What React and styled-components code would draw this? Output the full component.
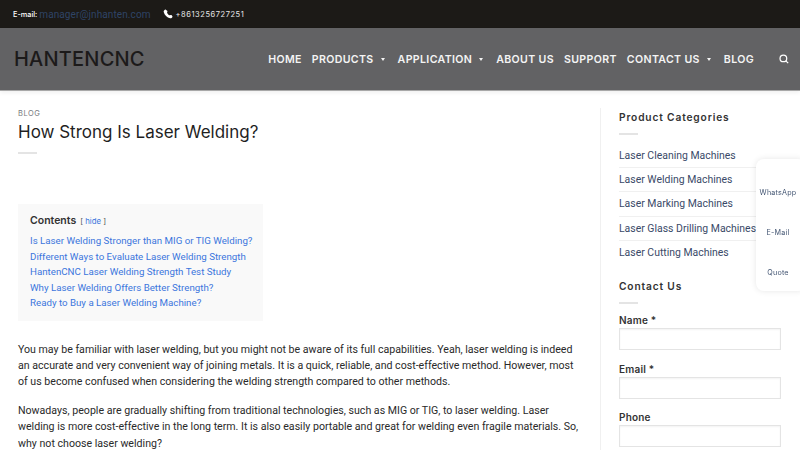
import styled, { createGlobalStyle } from "styled-components"

const GlobalStyle = createGlobalStyle`
html, body {
    margin: 0;
    padding: 0;
    height: 450px;
    overflow: hidden;
    background: #ffffff;
    font-family: Inter, "Liberation Sans", sans-serif;
}
* {
    box-sizing: border-box;
}
`

const menu = [
    { name: "HOME" },
    { name: "PRODUCTS", arrow: true },
    { name: "APPLICATION", arrow: true },
    { name: "ABOUT US" },
    { name: "SUPPORT" },
    { name: "CONTACT US", arrow: true },
    { name: "BLOG" },
]

const contents = [
    "Is Laser Welding Stronger than MIG or TIG Welding?",
    "Different Ways to Evaluate Laser Welding Strength",
    "HantenCNC Laser Welding Strength Test Study",
    "Why Laser Welding Offers Better Strength?",
    "Ready to Buy a Laser Welding Machine?",
]

const categories = [
    "Laser Cleaning Machines",
    "Laser Welding Machines",
    "Laser Marking Machines",
    "Laser Glass Drilling Machines",
    "Laser Cutting Machines",
]

export default function App() {
    return (
        <>
            <GlobalStyle />
            <TopBar>
                <MailLabel>E-mail:</MailLabel>
                <MailLink>manager@jnhanten.com</MailLink>
                <Phone>
                    <svg width="10" height="10" viewBox="0 0 24 24" fill="#ffffff">
                        <path d="M6.6 1.5c-.7-.4-1.500-.3-2.100.2L2.600 3.400C1.600 4.300 1.300 5.700 1.700 7c1 3.600 2.900 6.900 5.600 9.700 2.800 2.700 6.100 4.600 9.700 5.600 1.300.4 2.700.1 3.600-.9l1.700-1.900c.5-.6.6-1.400.2-2.100l-1.700-2.500c-.4-.6-1.200-.9-1.900-.7l-3 .9c-2.800-1.200-5-3.400-6.200-6.200l.9-3c.2-.7-.1-1.500-.7-1.900z" />
                    </svg>
                    <PhoneNumber>+8613256727251</PhoneNumber>
                </Phone>
            </TopBar>
            <Header>
                <Logo>HANTENCNC</Logo>
                <Nav>
                    {menu.map((item) => (
                        <NavItem key={item.name}>
                            {item.name}
                            {item.arrow && <Caret />}
                        </NavItem>
                    ))}
                    <SearchIcon width="10" height="10" viewBox="0 0 24 24" fill="none" stroke="#ffffff" strokeWidth="3">
                        <circle cx="10.500" cy="10.500" r="8" />
                        <path d="M16.500 16.500 L22 22" />
                    </SearchIcon>
                </Nav>
            </Header>
            <Page>
                <Main>
                    <Crumb>BLOG</Crumb>
                    <Title>How Strong Is Laser Welding?</Title>
                    <Divider />
                    <Toc>
                        <TocHead>
                            <TocTitle>Contents</TocTitle>
                            <TocToggle>[ <a>hide</a> ]</TocToggle>
                        </TocHead>
                        {contents.map((c) => <TocLink key={c}>{c}</TocLink>)}
                    </Toc>
                    <Paragraph>
                        You may be familiar with laser welding, but you might not be aware of its full capabilities. Yeah, laser welding is indeed an accurate and very convenient way of joining metals. It is a quick, reliable, and cost-effective method. However, most of us become confused when considering the welding strength compared to other methods.
                    </Paragraph>
                    <Paragraph>
                        Nowadays, people are gradually shifting from traditional technologies, such as MIG or TIG, to laser welding. Laser welding is more cost-effective in the long term. It is also easily portable and great for welding even fragile materials. So, why not choose laser welding?
                    </Paragraph>
                </Main>
                <Sidebar>
                    <WidgetTitle>Product Categories</WidgetTitle>
                    <Divider />
                    <CategoryList>
                        {categories.map((c) => <Category key={c}>{c}</Category>)}
                    </CategoryList>
                    <WidgetTitle>Contact Us</WidgetTitle>
                    <Divider />
                    <Form>
                        <FieldLabel>Name *</FieldLabel>
                        <Input />
                        <FieldLabel>Email *</FieldLabel>
                        <Input />
                        <FieldLabel>Phone</FieldLabel>
                        <Input />
                    </Form>
                </Sidebar>
            </Page>
            <FloatPanel>
                <FloatItem>WhatsApp</FloatItem>
                <FloatItem>E-Mail</FloatItem>
                <FloatItem>Quote</FloatItem>
            </FloatPanel>
        </>
    )
}

const TopBar = styled.div`
height: 28px;
background: #1c1a17;
display: flex;
align-items: center;
padding-left: 13px;
`

const MailLabel = styled.span`
font-size: 7.300px;
font-weight: 500;
color: #ffffff;
margin-right: 2px;
`

const MailLink = styled.a`
font-family: Roboto, sans-serif;
font-size: 10px;
letter-spacing: 0.1px;
color: #2f4466;
`

const Phone = styled.div`
display: flex;
align-items: center;
margin-left: 12px;
`

const PhoneNumber = styled.span`
font-size: 7.500px;
letter-spacing: 0.55px;
color: #e8e8e8;
margin-left: 3px;
`

const Header = styled.header`
height: 63px;
background: #626264;
border-bottom: 1px solid #a8a8a8;
box-shadow: 0 2px 4px rgba(0, 0, 0, 0.06);
display: flex;
align-items: center;
justify-content: space-between;
padding: 0 11px 0 14px;
`

const Logo = styled.div`
font-size: 20px;
font-weight: 500;
letter-spacing: 0.2px;
color: #1c1a1a;
`

const Nav = styled.nav`
display: flex;
align-items: center;
gap: 10px;
`

const NavItem = styled.a`
display: flex;
align-items: center;
font-size: 10.600px;
font-weight: 600;
letter-spacing: 0.35px;
color: #f4f4f4;
`

const Caret = styled.i`
width: 0;
height: 0;
margin: 1px 3px 0 7px;
border-left: 2.500px solid transparent;
border-right: 2.500px solid transparent;
border-top: 3px solid #f4f4f4;
`

const SearchIcon = styled.svg`
margin-left: 15px;
`

const Page = styled.div`
display: flex;
align-items: flex-start;
padding-left: 18px;
`

const Main = styled.main`
width: 583px;
height: 360px;
padding-right: 18px;
border-right: 1px solid #f0f0f0;
margin-top: 17px;
`

const Crumb = styled.div`
font-size: 7.500px;
line-height: 10px;
letter-spacing: 0.5px;
color: #777a80;
padding-top: 1px;
`

const Title = styled.h1`
margin: 2px 0 -1px;
font-size: 17px;
line-height: 23px;
font-weight: 400;
color: #1f1f1f;
`

const Divider = styled.div`
width: 19px;
height: 2px;
background: #e4e4e4;
margin-top: 9px;
`

const Toc = styled.div`
width: 245px;
height: 117px;
margin-top: 50px;
padding: 10px 12px;
background: #f9f9f9;
`

const TocHead = styled.div`
display: flex;
align-items: baseline;
height: 18px;
margin-bottom: 1px;
`

const TocTitle = styled.span`
font-size: 10.500px;
font-weight: 600;
color: #333333;
`

const TocToggle = styled.span`
font-size: 7.800px;
color: #555555;
margin-left: 4px;
a {
    color: #3b76dd;
}
`

const TocLink = styled.a`
display: block;
font-family: Roboto, sans-serif;
font-size: 9.720px;
line-height: 15.600px;
white-space: nowrap;
color: #3b76dd;
`

const Paragraph = styled.p`
margin: 21px 0 0;
width: 562px;
font-family: Roboto, sans-serif;
font-size: 10.620px;
line-height: 16.200px;
color: #2a2a2a;
& + & {
    margin-top: 12.500px;
}
`

const Sidebar = styled.aside`
width: 162px;
margin-left: 18px;
padding-top: 19px;
`

const WidgetTitle = styled.h3`
margin: 0;
font-size: 10.200px;
line-height: 14px;
font-weight: 600;
letter-spacing: 0.85px;
color: #333333;
`

const CategoryList = styled.div`
margin: 9px 0 14px;
`

const Category = styled.a`
display: block;
height: 24.200px;
font-family: Roboto, sans-serif;
font-size: 10.450px;
line-height: 23px;
white-space: nowrap;
color: #3a4a68;
border-bottom: 1px solid #f0f0f0;
&:last-child {
    border-bottom: none;
}
`

const Form = styled.div`
margin-top: 9px;
`

const FieldLabel = styled.label`
display: block;
font-size: 10px;
line-height: 14px;
font-weight: 600;
letter-spacing: 0.2px;
color: #333333;
margin-bottom: 1px;
`

const Input = styled.input`
display: block;
width: 162px;
height: 22px;
margin-bottom: 11.700px;
background: #ffffff;
border: 1px solid #e4e4e4;
box-shadow: inset 0 1px 2px rgba(0, 0, 0, 0.05);
`

const FloatPanel = styled.div`
position: fixed;
left: 756px;
top: 159px;
width: 50px;
height: 132px;
padding-top: 14px;
background: #ffffff;
border-radius: 8px;
box-shadow: 0 0 6px rgba(0, 0, 0, 0.1);
`

const FloatItem = styled.div`
height: 40px;
width: 44px;
padding-top: 15px;
text-align: center;
font-size: 7.200px;
line-height: 10px;
letter-spacing: 0.2px;
color: #445673;
`
